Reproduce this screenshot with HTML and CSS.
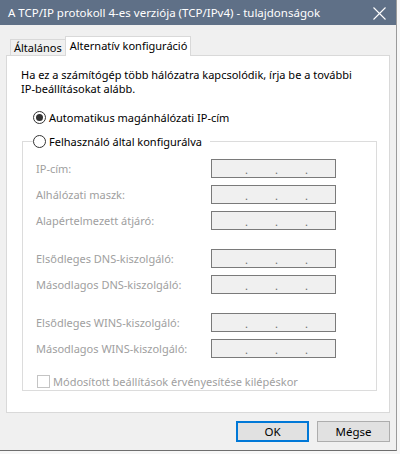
FILE: index.html
```html
<!DOCTYPE html>
<html lang="hu">

<head>
    <meta charset="UTF-8">
    <meta name="viewport" content="width=device-width, initial-scale=1.0">
    <title>A TCP/IP protokoll 4-es verziója (TCP/IPv4) - tulajdonságok</title>
    <link rel="stylesheet" href="styles.css">
</head>

<body>
    <div class="window">
        <div class="titlebar">
            <span class="title">A TCP/IP protokoll 4-es verziója (TCP/IPv4) - tulajdonságok</span>
            <svg class="close" width="13" height="13" viewBox="0 0 13 13">
                <path d="M0.5 0.5 L12.5 12.5 M12.5 0.5 L0.5 12.5" stroke="#fff" stroke-width="1.1" fill="none" />
            </svg>
        </div>

        <div class="client">
            <div class="tabs">
                <div class="tab">Általános</div>
                <div class="tab active">Alternatív konfiguráció</div>
            </div>

            <div class="panel">
                <p class="intro">Ha ez a számítógép több hálózatra kapcsolódik, írja be a további<br>IP-beállításokat alább.</p>

                <label class="radio-row auto"><span class="radio checked"></span>Automatikus magánhálózati IP-cím</label>

                <fieldset class="group">
                    <legend><label class="radio-row"><span class="radio"></span>Felhasználó által konfigurálva</label></legend>

                    <div class="rows">
                        <div class="row"><span class="label">IP-cím:</span><span class="ip"><i>.</i><i>.</i><i>.</i></span></div>
                        <div class="row"><span class="label">Alhálózati maszk:</span><span class="ip"><i>.</i><i>.</i><i>.</i></span></div>
                        <div class="row"><span class="label">Alapértelmezett átjáró:</span><span class="ip"><i>.</i><i>.</i><i>.</i></span></div>
                    </div>

                    <div class="rows">
                        <div class="row"><span class="label">Elsődleges DNS-kiszolgáló:</span><span class="ip"><i>.</i><i>.</i><i>.</i></span></div>
                        <div class="row"><span class="label">Másodlagos DNS-kiszolgáló:</span><span class="ip"><i>.</i><i>.</i><i>.</i></span></div>
                    </div>

                    <div class="rows">
                        <div class="row"><span class="label">Elsődleges WINS-kiszolgáló:</span><span class="ip"><i>.</i><i>.</i><i>.</i></span></div>
                        <div class="row"><span class="label">Másodlagos WINS-kiszolgáló:</span><span class="ip"><i>.</i><i>.</i><i>.</i></span></div>
                    </div>

                    <label class="check-row"><span class="checkbox"></span>Módosított beállítások érvényesítése kilépéskor</label>
                </fieldset>
            </div>

            <div class="buttons">
                <button class="btn default">OK</button>
                <button class="btn">Mégse</button>
            </div>
        </div>
    </div>
</body>

</html>
```

FILE: styles.css
```css
body {
    margin: 0;
    background-color: #f7f7f7;
    font-family: "Noto Sans", "Open Sans", sans-serif;
    font-size: 11px;
    color: #000;
}

.window {
    width: 396px;
    height: 450px;
    border-right: 1px solid #9a9a9a;
    border-bottom: 1px solid #6e6e6e;
    background-color: #f0f0f0;
}

.titlebar {
    height: 25px;
    background-color: #5f7087;
    color: white;
    font-size: 11.5px;
    display: flex;
    align-items: center;
    justify-content: space-between;
    padding: 0 10px 0 8px;
}

.title {
    white-space: nowrap;
}

.close {
    margin-top: 1px;
}

.client {
    padding: 11px 6px 0 6px;
}

/* tabs */
.tabs {
    display: flex;
    align-items: flex-end;
    padding-left: 4px;
    height: 19px;
}

.tab {
    box-sizing: border-box;
    height: 16px;
    line-height: 15px;
    padding: 0 3px;
    border: 1px solid #d9d9d9;
    border-bottom: none;
    background-color: #f0f0f0;
    white-space: nowrap;
}

.tab.active {
    height: 20px;
    line-height: 17px;
    padding: 0 3px 0 4px;
    margin-left: -1px;
    margin-bottom: -1px;
    background-color: white;
    position: relative;
    z-index: 1;
}

.panel {
    box-sizing: border-box;
    height: 358px;
    border: 1px solid #d9d9d9;
    background-color: white;
}

.intro {
    margin: 12px 0 0 14px;
    line-height: 14px;
}

/* radio buttons */
.radio-row {
    display: flex;
    align-items: center;
    gap: 3px;
    height: 15px;
    white-space: nowrap;
}

.radio-row.auto {
    margin: 14px 0 0 26px;
}

.radio {
    width: 11px;
    height: 11px;
    border: 1px solid #333;
    border-radius: 50%;
    background-color: white;
    display: flex;
    align-items: center;
    justify-content: center;
}

.radio.checked::after {
    content: "";
    width: 7px;
    height: 7px;
    border-radius: 50%;
    background-color: #333;
}

/* group box */
.group {
    margin: 9px 12px 0 15px;
    padding: 0 0 2px 10px;
    border: 1px solid #dcdcdc;
    min-width: 0;
}

.group legend {
    padding: 0 8px 0 0;
    height: 15px;
}

.rows {
    display: flex;
    flex-direction: column;
    gap: 7px;
    margin-top: 19px;
}

.rows:first-of-type {
    margin-top: 10px;
}

.row {
    display: flex;
    align-items: center;
    height: 19px;
    padding-left: 3px;
}

.label {
    width: 175px;
    color: #a0a0a0;
    white-space: nowrap;
}

.ip {
    width: 90px;
    height: 17px;
    border: 1px solid #7a7a7a;
    background-color: #f0f0f0;
    display: flex;
    padding-left: 33px;
}

.ip i {
    font-style: normal;
    width: 30px;
    line-height: 19px;
    color: #6d6d6d;
}

/* checkbox */
.check-row {
    display: flex;
    align-items: center;
    gap: 3px;
    height: 14px;
    margin: 16px 0 0 4px;
    color: #a0a0a0;
    white-space: nowrap;
}

.checkbox {
    width: 11px;
    height: 11px;
    border: 1px solid #c4c4c4;
    background-color: white;
}

/* dialog buttons */
.buttons {
    display: flex;
    justify-content: flex-end;
    gap: 8px;
    margin-top: 8px;
}

.btn {
    box-sizing: border-box;
    width: 73px;
    height: 21px;
    border: 1px solid #adadad;
    background-color: #e1e1e1;
    font-family: inherit;
    font-size: 11.5px;
    padding: 0;
    color: #000;
}

.btn.default {
    border: 2px solid #0078d7;
}
```
